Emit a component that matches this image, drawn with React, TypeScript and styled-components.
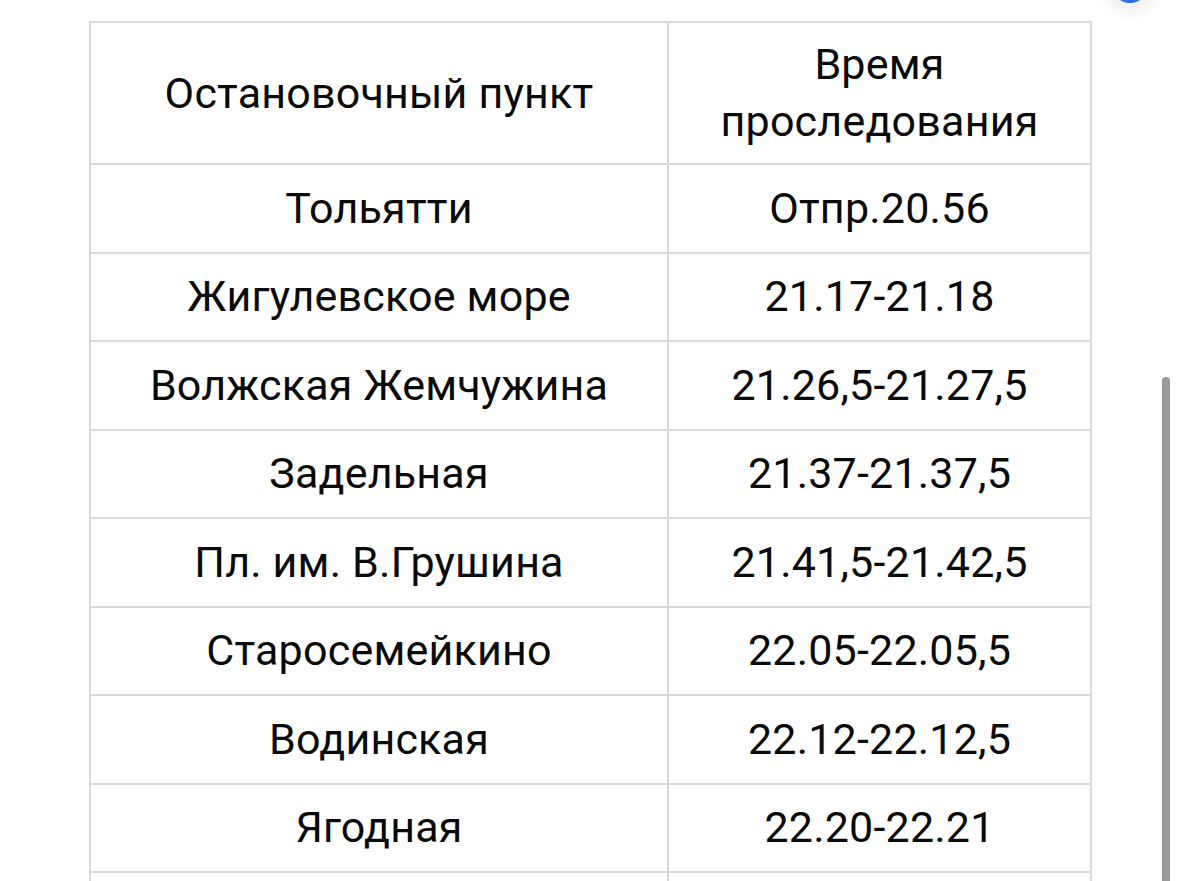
import React from "react";
import styled, { createGlobalStyle } from "styled-components";

const GlobalStyle = createGlobalStyle`
  html, body {
    margin: 0;
    padding: 0;
    background: #ffffff;
    overflow: hidden;
    height: 881px;
  }
  body {
    font-family: Roboto, "Noto Sans", "Liberation Sans", sans-serif;
    color: #0a0a0a;
  }
`;

const Page = styled.div`
  padding: 21px 0 0 89px;
`;

const Schedule = styled.table`
  border-collapse: collapse;
  width: 1001px;
  font-size: 43px;
  line-height: 57px;
  letter-spacing: 0.2px;
  table-layout: fixed;

  td,
  th {
    border: 2px solid #d8d8d8;
    text-align: center;
    vertical-align: middle;
    font-weight: 400;
    padding: 0 6px;
  }
`;

const HeadRow = styled.tr`
  height: 142px;
`;

const Row = styled.tr`
  height: 88.5px;
`;

const StopCol = styled.col`
  width: 578px;
`;

const TimeCol = styled.col`
  width: 423px;
`;

const Scrollbar = styled.div`
  position: fixed;
  left: 1162px;
  top: 377px;
  bottom: 0;
  width: 8px;
  border-radius: 4px 4px 0 0;
  background: #9a9a9a;
`;

const RefreshDot = styled.div`
  position: fixed;
  left: 1112px;
  top: -33px;
  width: 36px;
  height: 36px;
  border-radius: 50%;
  background: #2b6fe3;
  box-shadow: 0 2px 14px 8px rgba(0, 0, 0, 0.06);
`;

const stops: [string, string][] = [
  ["Тольятти", "Отпр.20.56"],
  ["Жигулевское море", "21.17-21.18"],
  ["Волжская Жемчужина", "21.26,5-21.27,5"],
  ["Задельная", "21.37-21.37,5"],
  ["Пл. им. В.Грушина", "21.41,5-21.42,5"],
  ["Старосемейкино", "22.05-22.05,5"],
  ["Водинская", "22.12-22.12,5"],
  ["Ягодная", "22.20-22.21"],
  ["", ""],
];

export default function App() {
  return (
    <Page>
      <GlobalStyle />
      <Schedule>
        <colgroup>
          <StopCol />
          <TimeCol />
        </colgroup>
        <tbody>
          <HeadRow>
            <th>Остановочный пункт</th>
            <th>
              Время
              <br />
              проследования
            </th>
          </HeadRow>
          {stops.map(([stop, time], i) => (
            <Row key={i}>
              <td>{stop}</td>
              <td>{time}</td>
            </Row>
          ))}
        </tbody>
      </Schedule>
      <Scrollbar />
      <RefreshDot />
    </Page>
  );
}
